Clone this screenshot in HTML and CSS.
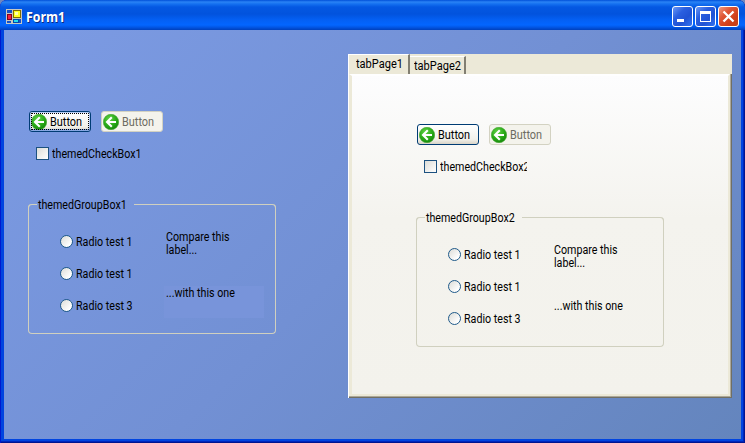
FILE: index.html
```html
<!DOCTYPE html>
<html lang="en">
<head>
<meta charset="utf-8">
<title>Form1</title>
<link rel="stylesheet" href="styles.css">
</head>
<body>
<svg class="defs" width="0" height="0">
  <defs>
    <radialGradient id="green" cx=".4" cy=".3" r=".7"><stop offset="0" stop-color="#62d247"/><stop offset=".6" stop-color="#2bac19"/><stop offset="1" stop-color="#168c0c"/></radialGradient>
    <symbol id="back" viewBox="0 0 16 16"><circle cx="8" cy="8" r="7.7" fill="url(#green)" stroke="#43a52f" stroke-width=".6"/><path d="M13 8H4.5M8.8 3.2L4 8l4.8 4.8" fill="none" stroke="#fff" stroke-width="2.1"/></symbol>
  </defs>
</svg>
<div class="window">
  <header class="titlebar">
    <svg class="app-icon" width="16" height="15" viewBox="0 0 16 15" shape-rendering="crispEdges">
      <path fill="#c8c8c0" d="M0 0h16v15H0z"/>
      <path fill="#1550c8" d="M1 1h5v3H1zM1 12h4v2H1zM13 10h2v4h-2z"/>
      <path fill="#800020" d="M1 5h5v6H1z"/><path fill="#f02040" d="M2 6h3v4H2z"/>
      <path fill="#806c00" d="M7 1h8v8H7z"/><path fill="#ffff20" d="M8 2h6v6H8z"/><path fill="#ffffb0" d="M9 3h3v3H9z"/>
      <path fill="#0048b0" d="M7 10h6v4H7z"/><path fill="#20e0f0" d="M8 11h4v2H8z"/>
    </svg>
    <h1>Form1</h1>
    <div class="controls">
      <svg class="ctl" viewBox="1 1 19 19"><path fill="#fff" d="M5 13h7v3H5z"/></svg>
      <svg class="ctl" viewBox="1 1 19 19"><path fill="#fff" fill-rule="evenodd" d="M5 5h11v11H5zM6 8v7h9V8z"/></svg>
      <svg class="ctl close" viewBox="1 1 19 19"><path stroke="#fff" stroke-width="2.3" d="M5.5 5.5l10 10M15.5 5.5l-10 10"/></svg>
    </div>
  </header>
  <main class="client">
    <section class="form plain">
      <div class="buttons">
        <button class="btn focused"><svg width="16" height="16"><use href="#back"/></svg><span>Button</span></button>
        <button class="btn disabled"><svg width="16" height="16"><use href="#back"/></svg><span>Button</span></button>
      </div>
      <div class="check"><i class="box"></i><span class="t">themedCheckBox1</span></div>
      <div class="group">
        <div class="legend"><i class="cap"></i><span class="t">themedGroupBox1</span><i class="rule"></i></div>
        <div class="group-body">
          <div class="radios">
            <div class="radio"><i></i><span class="t">Radio test 1</span></div>
            <div class="radio"><i></i><span class="t">Radio test 1</span></div>
            <div class="radio"><i></i><span class="t">Radio test 3</span></div>
          </div>
          <div class="labels">
            <p><span class="t">Compare this<br>label...</span></p>
            <p class="tinted"><span class="t">...with this one</span></p>
          </div>
        </div>
      </div>
    </section>
    <section class="tabs">
      <nav class="tabstrip">
        <div class="tab active"><span class="t">tabPage1</span></div>
        <div class="tab"><span class="t">tabPage2</span></div>
      </nav>
      <div class="page">
        <div class="form">
          <div class="buttons">
            <button class="btn"><svg width="16" height="16"><use href="#back"/></svg><span>Button</span></button>
            <button class="btn disabled"><svg width="16" height="16"><use href="#back"/></svg><span>Button</span></button>
          </div>
          <div class="check"><i class="box"></i><span class="t clipped">themedCheckBox2</span></div>
          <div class="group">
            <div class="legend"><i class="cap"></i><span class="t">themedGroupBox2</span><i class="rule"></i></div>
            <div class="group-body">
              <div class="radios">
                <div class="radio"><i></i><span class="t">Radio test 1</span></div>
                <div class="radio"><i></i><span class="t">Radio test 1</span></div>
                <div class="radio"><i></i><span class="t">Radio test 3</span></div>
              </div>
              <div class="labels">
                <p><span class="t">Compare this<br>label...</span></p>
                <p><span class="t">...with this one</span></p>
              </div>
            </div>
          </div>
        </div>
      </div>
    </section>
  </main>
</div>
</body>
</html>
```
FILE: styles.css
```css
* { box-sizing: border-box; }
body { margin: 0; background: #7187bd; font: 12px/13px Roboto, "Liberation Sans", sans-serif; color: #000; overflow: hidden; }
.defs { display: block; height: 0; }
.window {
  width: 745px; height: 443px; padding: 0 4px 4px;
  border-radius: 7px 7px 0 0;
  background: #0044e0;
  box-shadow: inset 1px 0 #0019cf, inset -1px 0 #001590, inset 0 -1px #001590, inset -2px -2px #0026bc;
}
.titlebar {
  height: 30px; margin: 0 -4px; padding: 2px 6px 0;
  display: flex; align-items: center;
  border-radius: 7px 7px 0 0;
  background: linear-gradient(#0050d8 0, #2a83f5 2px, #1470f0 4px, #0458e2 7px, #0253dd 14px, #0460f4 20px, #0366ff 25px, #0258e8 27px, #0040bc 30px);
}
.app-icon { flex: none; }
h1 { margin: 1px 0 0 4px; font: bold 14px/16px "Open Sans", sans-serif; color: #fff; text-shadow: 1px 1px #0c2a80; transform: scaleX(.88); transform-origin: left; }
.controls { margin-left: auto; display: flex; gap: 2px; }
.ctl { width: 21px; height: 21px; border: 1px solid #fff; border-radius: 3px; background: linear-gradient(135deg, #6b98f5, #2a5fe0 35%, #2052d4 65%, #3274f2); }
.ctl.close { background: linear-gradient(135deg, #f19a80, #df5534 35%, #cf3f18 70%, #c84018); }
.client { height: 409px; display: flex; background: linear-gradient(135deg, #7c9be4, #7290d4 50%, #6485bd); }
.plain { width: 344px; flex: none; padding: 81px 0 0 24px; }
.t { display: inline-block; white-space: nowrap; transform: scaleX(.89); transform-origin: left; }
.tab .t { transform: scaleX(.92); }
.buttons { display: flex; gap: 10px; padding-left: 1px; }
.btn {
  width: 62px; height: 21px; padding: 0 0 0 1px; display: flex; align-items: center;
  border: 1px solid #003c74; border-radius: 3px;
  background: linear-gradient(#fff, #f2f1eb 75%, #d9d4c8); font: inherit; color: #000;
}
.btn svg { flex: none; }
.btn span { margin: 2px 0 0 3px; transform: scaleX(.91); transform-origin: left; }
.btn.focused { box-shadow: inset 0 -2px #86a7e3, inset 0 0 0 1px #b9cef5; outline: 1px dotted #000; outline-offset: -3px; }
.btn.disabled { border-color: #d3d2c2; background: #f4f3ec; color: #6c6b62; }
.check { width: 120px; height: 13px; margin: 15px 0 0 8px; display: flex; gap: 3px; align-items: center; }
.check .t { margin-top: 2px; }
.clipped { clip-path: inset(0 3px 0 0); }
.box { flex: none; width: 13px; height: 13px; border: 1px solid #1c5180; background: linear-gradient(135deg, #dcdcd7, #fff); }
.group { width: 248px; height: 130px; margin-top: 44px; border: 1px solid #d0d0bf; border-top: 0; border-radius: 4px; }
.legend { height: 13px; margin: 0 -1px; display: flex; align-items: flex-start; }
.legend .t { width: 97px; margin-top: -5px; padding-left: 1px; }
.cap { width: 9px; height: 6px; border: solid #d0d0bf; border-width: 1px 0 0 1px; border-top-left-radius: 4px; }
.rule { flex: 1; height: 6px; border: solid #d0d0bf; border-width: 1px 1px 0 0; border-top-right-radius: 4px; }
.group-body { display: flex; padding: 18px 0 0 31px; }
.radios { width: 104px; display: flex; flex-direction: column; gap: 19px; }
.radio { height: 13px; display: flex; align-items: center; gap: 3px; }
.radio .t { margin-top: 2px; }
.radio i { width: 13px; height: 13px; border: 1px solid #1f5a8a; border-radius: 50%; background: linear-gradient(135deg, #dcdcd7, #fff 80%); }
.labels p { width: 100px; height: 32px; margin: -4px 0 0; padding: 0 0 0 2px; }
.labels p + p { margin-top: 23px; padding-top: 1px; }
.plain .tinted { background: #7894da; }
.tabs {
  width: 384px; height: 344px; margin-top: 24px; padding: 0 2px 2px 0;
  display: flex; flex-direction: column;
  background: #ece9d8; border-left: 1px solid #fff;
  box-shadow: inset -1px -1px #716f64, inset -2px -2px #aca899;
}
.tabstrip { height: 20px; flex: none; margin-right: -2px; display: flex; align-items: flex-end; background: #ece9d8; }
.tab { width: 56px; height: 18px; padding: 3px 0 0 4px; border-top: 1px solid #fff; border-right: 2px solid #827f72; }
.tab.active { width: 61px; height: 20px; padding: 3px 0 0 7px; }
.page { flex: 1; padding: 48px 0 0 64px; border: solid #ece9d8; border-width: 2px 2px 2px 3px; border-top-color: #fff; background: linear-gradient(#fdfdfe, #f4f3ee 45%, #f3f2ec); }
```
